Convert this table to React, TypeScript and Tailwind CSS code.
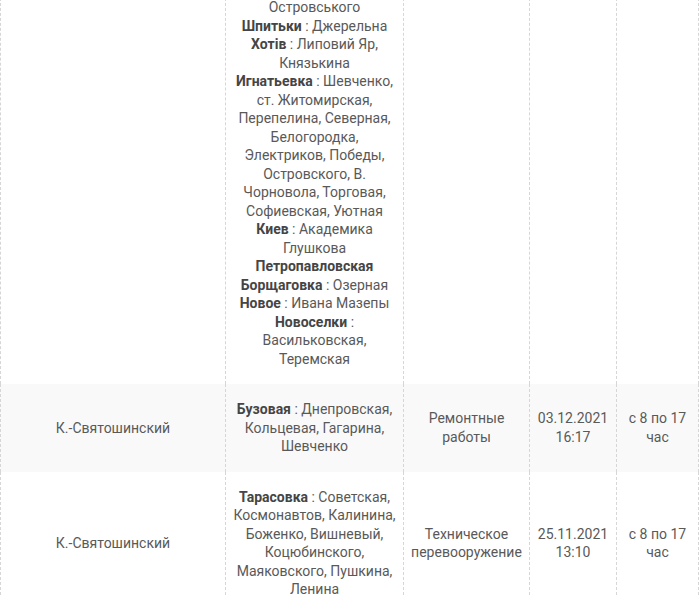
type Entry = { place: string; streets?: string };

type Row = {
  district: string;
  lead?: string;
  entries: Entry[];
  reason: string;
  date: string;
  time: string;
  shaded?: boolean;
};

const rows: Row[] = [
  {
    district: "",
    lead: "Островського",
    entries: [
      { place: "Шпитьки", streets: "Джерельна" },
      { place: "Хотів", streets: "Липовий Яр, Князькина" },
      {
        place: "Игнатьевка",
        streets:
          "Шевченко, ст. Житомирская, Перепелина, Северная, Белогородка, Электриков, Победы, Островского, В. Чорновола, Торговая, Софиевская, Уютная",
      },
      { place: "Киев", streets: "Академика Глушкова" },
      { place: "Петропавловская Борщаговка", streets: "Озерная" },
      { place: "Новое", streets: "Ивана Мазепы" },
      { place: "Новоселки", streets: "Васильковская, Теремская" },
    ],
    reason: "",
    date: "",
    time: "",
  },
  {
    district: "К.-Святошинский",
    entries: [
      { place: "Бузовая", streets: "Днепровская, Кольцевая, Гагарина, Шевченко" },
    ],
    reason: "Ремонтные работы",
    date: "03.12.2021 16:17",
    time: "с 8 по 17 час",
    shaded: true,
  },
  {
    district: "К.-Святошинский",
    entries: [
      {
        place: "Тарасовка",
        streets:
          "Советская, Космонавтов, Калинина, Боженко, Вишневый, Коцюбинского, Маяковского, Пушкина, Ленина",
      },
    ],
    reason: "Техническое перевооружение",
    date: "25.11.2021 13:10",
    time: "с 8 по 17 час",
  },
];

const cell =
  "flex items-center justify-center text-center border-l border-dashed border-[#d6d6d6]";

function Places({ lead, entries }: { lead?: string; entries: Entry[] }) {
  return (
    <div>
      {lead && <div>{lead}</div>}
      {entries.map((e) => (
        <div key={e.place}>
          <b className="font-bold text-[#454545]">{e.place}</b>
          {e.streets ? ` : ${e.streets}` : " :"}
        </div>
      ))}
    </div>
  );
}

export default function App() {
  return (
    <div
      className="w-[700px] h-[596px] overflow-hidden bg-white text-[14px] leading-[18.5px] text-[#595959]"
      style={{ fontFamily: "Roboto, 'Liberation Sans', sans-serif" }}
    >
      <div className="w-[699px] -mt-[2px]">
        {rows.map((r, i) => (
          <div
            key={i}
            className={`grid grid-cols-[225px_178px_126px_87px_83px] ${
              r.shaded ? "bg-[#f9f9f9]" : "bg-white"
            }`}
          >
            <div className={`${cell} px-[10px] ${i === 0 ? "" : "py-[16px]"}`}>
              {r.district}
            </div>
            <div
              className={`${cell} px-[5px] ${i === 0 ? "pb-[16px]" : "py-[16px]"}`}
            >
              <Places lead={r.lead} entries={r.entries} />
            </div>
            <div className={`${cell} px-[6px]`}>{r.reason}</div>
            <div className={`${cell} px-[6px]`}>{r.date}</div>
            <div className={`${cell} px-[8px] border-r`}>{r.time}</div>
          </div>
        ))}
      </div>
    </div>
  );
}
